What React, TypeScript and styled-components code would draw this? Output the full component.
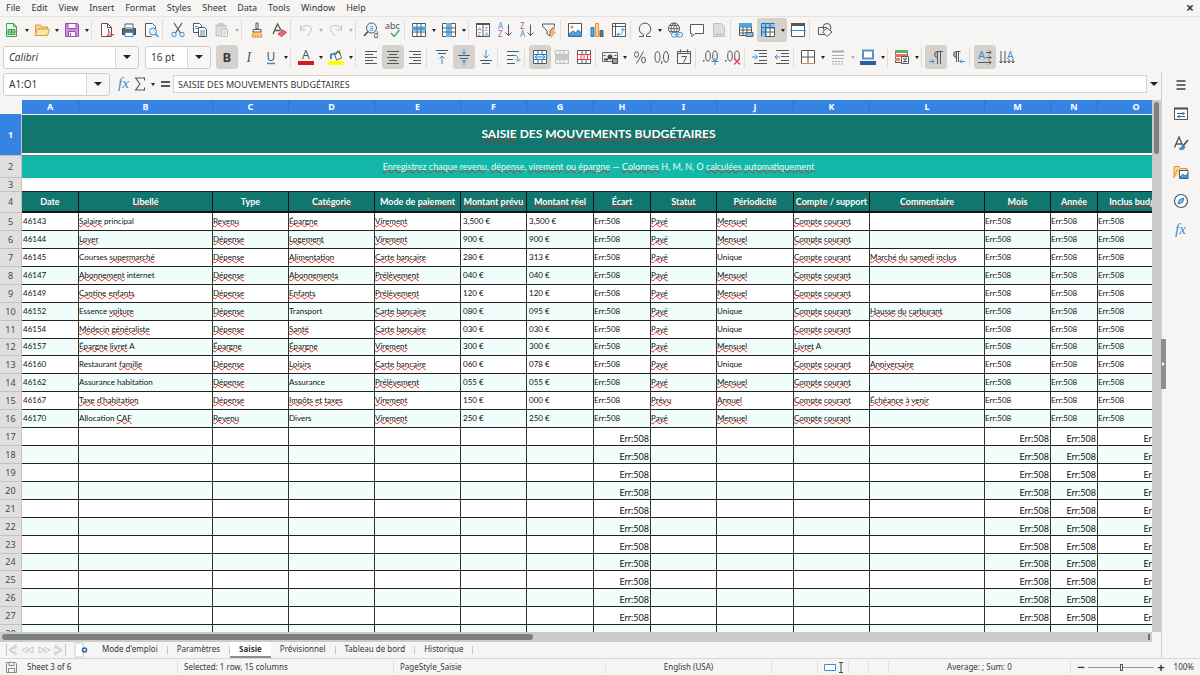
import React from 'react';
import styled, { createGlobalStyle, css } from 'styled-components';

const GlobalStyle = createGlobalStyle`
  * { box-sizing: border-box; }
  body { margin: 0; background: #f6f5f4; color: #33373a; font: 9px/12px "Noto Sans", "Open Sans", sans-serif; overflow: hidden; }
  button, input { font: inherit; color: inherit; margin: 0; padding: 0; border: 0; background: none; }
  svg { display: block; flex: none; overflow: visible; }
`;

/* ---------- icons ---------- */

const G = '#55585a';
const B = '#3c8fd0';
const O = '#e58f3c';
const D = '#c3c2c1';
const V2 = '#b05ac0';

const p = (d: string, stroke = G, fill = 'none', w = 1) => (
  <path d={d} stroke={stroke} fill={fill} strokeWidth={w} />
);
const grid = 'M1.5 1.5h13v13h-13zM1.5 6h13M1.5 10h13M6 1.5v13M10 1.5v13';

const ICONS: Record<string, React.ReactNode> = {
  new: <>{p('M2.5 1.5h7l3 3v10h-10z', '#3fa34d', '#e9f7ea')}{p('M9.5 1.5v3h3', '#3fa34d')}{p('M4 7.5h7v5H4zM4 10h7M7.5 7.5v5', '#3fa34d', '#9ed8a3')}</>,
  open: <>{p('M1.5 13V3h5l1 2h6v2', '#e09a3b', '#fbd58c')}{p('M1 13.5L3.5 7H15.5l-2 6.5z', '#e09a3b', '#fde3ac')}</>,
  save: <>{p('M1.5 1.5h12l1 1v12h-13z', '#9c4fb0', '#cf8fdd')}{p('M4 1.5h8v5H4z', '#9c4fb0', '#fff')}{p('M4.5 9.5h7v5h-7z', '#9c4fb0', '#fff')}{p('M6.5 11v3', '#9c4fb0')}</>,
  pdf: <>{p('M2.500 1.5h6l4 4v9h-10z', G, '#fdfdfd')}{p('M8.5 1.5v4h4')}{p('M7 15c3-3 3-5 2.5-8c0 4 2 5 5.500 6c-3-1-5 0-8 2', '#d9434b')}</>,
  print: <>{p('M4 2h8v4H4z', G, '#fff')}{p('M1.5 6.5h13v6h-13z', '#3f4447', '#63686b')}{p('M4 6h8', '#7cc4f3', 'none', 2)}{p('M4 10.5h8v4H4z', B, '#fff')}</>,
  preview: <>{p('M2.5 14.5v-13h7l3 3V7', G, '#fdfdfd')}{p('M2.5 14.500h6')}<circle cx="10" cy="9.5" r="3.5" stroke={B} fill="#e5f2fb" />{p('M12.500 12l3 3', B, 'none', 1.5)}</>,
  cut: <>{p('M4 1l6.5 10M12 1L5.5 11', G, 'none', 1.2)}<circle cx="4" cy="12.500" r="2.2" stroke={B} fill="none" /><circle cx="12" cy="12.5" r="2.2" stroke={B} fill="none" /></>,
  copy: <>{p('M1.5 1.5h6l2 2v7h-8z', G, '#fff')}{p('M6.5 5.5h6l2 2v7h-8z', G, '#fff')}{p('M8 9h5M8 11h5M8 13h5M3 4.5h3M3 6.5h3', B)}</>,
  paste: <>{p('M2 3h10v11H2z', D, '#dddddc')}{p('M5 1.5h4v3H5z', D, '#cfcfce')}{p('M7.5 7.5h6v7h-6z', D, '#f3f3f2')}{p('M9 10h3M9 12h3', D)}</>,
  clone: <>{p('M7 1h2v6H7z', G, '#fff')}{p('M4 7.5h8v2.5H4z', G, '#fff')}{p('M4 10.5L3 15h10l-1-4.5z', O, '#fbd58c')}{p('M6 12v3M9 12v3', O)}</>,
  clear: <>{p('M2 12L6.5 2L10.5 9M4 8.5h5', G, 'none', 1.3)}{p('M7 12l5-4l3.5 2.5l-5 4z', '#d9434b', '#ee6a72')}</>,
  undo: <>{p('M2.5 3v5h5', D)}{p('M2.5 8C5 2 13 2 13.5 7c0 3-3 4-4 7', D)}</>,
  redo: <>{p('M13.5 3v5h-5', D)}{p('M13.5 8C11 2 3 2 2.5 7c0 3 3 4 4 7', D)}</>,
  find: <><circle cx="8.5" cy="6" r="5" stroke={G} fill="#eaf4fc" />{p('M5 9.5L1 14', G, 'none', 1.8)}<text x="6" y="8.5" fontSize="8" fill={B}>a</text><text x="10.5" y="15.5" fontSize="8" fill={G}>d</text></>,
  spell: <><text x="0" y="7" fontSize="9" fill={G}>abc</text>{p('M6 11l3 3.5L14.5 8', '#43a85a', 'none', 1.4)}</>,
  row: <>{p(grid, G, '#fff')}<rect x="1" y="4.5" width="14" height="4" fill="#4fa3e0" />{p('M6 5v3M10 5v3', '#2d7ab8')}</>,
  col: <>{p(grid, G, '#fff')}<rect x="5" y="1" width="5" height="14" fill="#6bb5ea" />{p('M5 6h5M5 10h5', '#2d7ab8')}</>,
  sort: <>{p('M1.5 1.5h13v13h-13zM8 1.5v13', G, '#fff')}{p('M1 2h14', G, 'none', 2)}<text x="2.5" y="8.500" fontSize="6" fill={B}>A</text><text x="2.5" y="14" fontSize="6" fill={V2}>Z</text><text x="9.5" y="8.5" fontSize="6" fill={V2}>Z</text><text x="9.5" y="14" fontSize="6" fill={B}>A</text></>,
  asc: <><text x="1" y="7" fontSize="8" fill={B}>A</text><text x="1" y="15" fontSize="8" fill={V2}>Z</text>{p('M11.5 2.5v11M8.5 10.5l3 3l3-3')}</>,
  desc: <><text x="1" y="7" fontSize="8" fill={V2}>Z</text><text x="1" y="15" fontSize="8" fill={B}>A</text>{p('M11.5 2.5v11M8.5 10.5l3 3l3-3')}</>,
  filter: <>{p('M1.5 2h12v2L9 9v5l-3-2V9L1.5 4z')}{p('M12 6l-3 5h2l-1 5l4.5-6h-2.5l2-4z', O, '#fbb765', 0.5)}</>,
  image: <>{p('M1.5 1.5h13v13h-13z', G, '#fff')}{p('M2 12l4-3l3 2l2-3l3.5 3v3H2z', '#2f7fc0', '#4fa3e0')}<circle cx="5" cy="5" r="1.5" fill={O} /></>,
  chart: <>{p('M2 5.5h3v9H2z', '#2f7fc0', '#4fa3e0')}{p('M6.5 1.5h3v13h-3z', O, '#fbd58c')}{p('M11 8.5h3v6h-3z', G, '#777')}</>,
  pivot: <>{p('M1.5 1.5h13v13h-13zM1.5 4.5h13M4.5 1.5v13', G, '#fff')}{p('M6 12.5h2c3 0 4-2 4-6M8 10.5l-2 2l2 2M10 8.500l2-2l2 2', B)}</>,
  omega: p('M2 14.5h4.5v-2A5.8 5.8 0 1 1 9.5 12.5v2H14'),
  link: <><circle cx="7" cy="6.5" r="5.5" stroke={G} fill="none" />{p('M1.5 6.5h11M7 1v11M3 3.5h8M3 9.5h8M7 1c-4 3-4 8 0 11c4-3 4-8 0-11', G, 'none', 0.8)}<rect x="4.5" y="10.5" width="6" height="4.5" rx="2" stroke={B} fill="#f6f5f4" /><rect x="9.5" y="10.5" width="6" height="4.5" rx="2" stroke={B} fill="#f6f5f4" />{p('M7.500 12.750h5', B)}</>,
  comment: p('M1.5 2.5h13v9H6l-3 3v-3H1.5z', G, '#fdfdfd'),
  header: <>{p('M2.5 1.5h8l3 3v10h-11z', D, '#dededd')}{p('M4 12.5h8', '#c6c6c5', 'none', 2)}</>,
  printarea: <>{p('M1.5 1.5h12v12h-12zM1.5 5h12M1.5 8h12M1.5 11h12M5 1.5v12M9 1.5v12', G, '#fff')}<rect x="1" y="1" width="13" height="4" fill="#4fa3e0" />{p('M8 10.5h7v4H8z', '#42627c', '#8db8d6')}</>,
  freeze: <>{p(grid, G, '#fff')}<path d="M1 1h5v14H1zM6 1h9v5H6z" fill="#8bc6f0" />{p('M5.5 1v14M1 5.5h14M1.5 1.5h13M1.5 1.5v13M1.5 10h4M10 1.5v4', '#2873ad')}</>,
  split: <>{p('M1.5 1.5h13v13h-13z', G, '#fff')}{p('M1 2.5h14', G, 'none', 3)}{p('M0 8.5h16', B)}</>,
  shapes: <>{p('M1.5 5.5h8v7h-8z')}<circle cx="10" cy="5.5" r="4" stroke={G} fill="none" />{p('M10 6l5 4l-5 4.5L5.5 10z', G, '#f6f5f4')}</>,
  bold: <text x="3.5" y="12.5" fontSize="13" fontWeight="700" fill="#3a3d3f" fontFamily="Noto Sans">B</text>,
  italic: <text x="5.5" y="12.5" fontSize="14" fontStyle="italic" fill={G} fontFamily="Liberation Serif">I</text>,
  underline: <><text x="3.5" y="12" fontSize="12" fill={G}>U</text>{p('M4 14.5h8', B, 'none', 1.5)}</>,
  color: <><text x="4" y="10" fontSize="12" fill={G}>A</text><rect x="0" y="12" width="16" height="4" fill="#c9211e" /></>,
  fill: <>{p('M6.500 4.500l5-1.500l2 6l-5 2z', G, '#fff')}{p('M7.500 6l2-4h2v3', G)}{p('M3 10V5.500l4-1', B, 'none', 2)}<rect x="0" y="12" width="16" height="4" fill="#ffff00" /></>,
  left: p('M2 2.500h12M2 5.500h8M2 8.500h12M2 11.500h8M2 14.500h12'),
  center: p('M2 2.5h12M4 5.5h8M2 8.5h12M4 11.5h8M2 14.5h12'),
  right: p('M2 2.5h12M6 5.5h8M2 8.5h12M6 11.5h8M2 14.5h12'),
  top: <>{p('M2 1.5h12M4 4.5h8')}{p('M8 15V7M5.5 9.5L8 7l2.5 2.5', B)}</>,
  middle: <>{p('M2 6.5h12M4 9.5h8')}{p('M8 0v5M6 3l2 2l2-2M8 16v-5M6 13l2-2l2 2', B)}</>,
  bottom: <>{p('M2 11.5h12M4 14.5h8')}{p('M8 1v8M5.5 6.5L8 9l2.5-2.5', B)}</>,
  wrap: <>{p('M2 2.5h12M2 6.5h7M2 10.5h6M2 14.5h8')}{p('M9 6.5h1c3 0 3 2 3 5M10.5 10l2.5 2.5L15.5 10', B)}</>,
  mergec: <>{p(grid, G, '#fff')}<rect x="1.5" y="5.5" width="13" height="5" fill="#e5f2fb" stroke="#2f7fc0" />{p('M3 8h10M5 6L3 8l2 2M11 6l2 2l-2 2', B)}</>,
  merge: <>{p(grid, D, '#eeeeed')}<rect x="1" y="5" width="14" height="6" fill="#c6c6c5" /></>,
  unmerge: <>{p(grid, G, '#fff')}{p('M1.5 5.5h13v5h-13zM5 5v6M8 5v6M11.5 5v6', '#d9434b', '#fff')}</>,
  currency: <>{p('M.5 3.5h15v9H.5z', '#6a6d6f', '#f0f0ef')}<circle cx="8" cy="8" r="2.5" fill="#4a4d4f" />{p('M10.5 9.500h5v5h-5z', '#4a4d4f', '#9a9d9f')}{p('M2 10.500h4M2.500 6v1M13.500 6v1', '#4a4d4f', 'none', 2)}</>,
  percent: <><ellipse cx="4.5" cy="5.5" rx="2" ry="2.8" stroke={G} fill="none" /><ellipse cx="11.5" cy="11" rx="2" ry="2.8" stroke={G} fill="none" />{p('M11.5 2.5l-7 12')}</>,
  number: <><ellipse cx="3.500" cy="8" rx="2.5" ry="5.5" stroke={G} fill="none" /><ellipse cx="12" cy="8" rx="2.5" ry="5.5" stroke={G} fill="none" />{p('M8 12l-.5 3')}</>,
  date: <>{p('M1.5 2.5h13v12h-13zM1.5 4.5h13M4.5 .5v3M11.5 .5v3')}{p('M5.5 7.500h5l-3 6')}</>,
  adddec: <><ellipse cx="5" cy="7" rx="2.3" ry="5" stroke={G} fill="none" /><ellipse cx="12" cy="7" rx="2.3" ry="5" stroke={G} fill="none" /><rect x="0" y="11" width="1.5" height="1.5" fill={G} />{p('M12 9v7M8.5 12.5h7', B)}</>,
  deldec: <><ellipse cx="5" cy="7" rx="2.3" ry="5" stroke={G} fill="none" /><ellipse cx="12" cy="7" rx="2.3" ry="5" stroke={G} fill="none" /><rect x="0" y="11" width="1.5" height="1.5" fill={G} />{p('M9 9.5l6 6M15 9.5l-6 6', '#e0434b', 'none', 1.2)}</>,
  indent: <>{p('M2 1.5h13M7 4.5h8M7 7.5h8M7 11.5h8M2 14.5h13')}{p('M0 8h5M3 5.5L5.5 8L3 10.5', B)}</>,
  outdent: <>{p('M2 1.5h13M7 4.5h8M7 7.5h8M7 11.5h8M2 14.5h13')}{p('M6 8H1M3.5 5.5L1 8l2.5 2.5', B)}</>,
  borders: <>{p('M1.5 1.5h13v13h-13z', G, '#fff')}{p('M1.5 8h13M8 1.5v13')}{p('M1.5 14.5h13', O)}</>,
  lines: <>{p('M2 2.5h12', '#aaa', 'none', 2)}{p('M2 6.5h12M2 9.5h12', '#aaa')}<path d="M2 12.5h12M2 15h12" stroke="#aaa" strokeDasharray="2 1" /></>,
  bcolor: <>{p('M3 1.5h10v8H3z', '#5c93c4', '#fff', 2)}<rect x="0" y="12" width="16" height="4" fill="#2a6099" /></>,
  cond: <>{p('M1.5 1.5h12v12h-12z', G, '#fff')}<rect x="1" y="1" width="13" height="3" fill="#58b368" /><rect x="1" y="5" width="13" height="3" fill="#ee6a72" /><rect x="1" y="9" width="5" height="3" fill={O} />{p('M7.5 7.5h7v7h-7z', G, '#fff')}{p('M9 10h4M9 12.5h4M12 8.5l-2 5')}</>,
  ltr: <>{p('M9.500 15V2.5h5.500M12.5 2.5V15')}{p('M9.500 2.5a3 3 0 0 0 0 6z', G, '#b9b7b5')}{p('M1 12.5h5M4 10.5l2 2l-2 2', B)}</>,
  rtl: <>{p('M6.500 13V2.5h4M8.5 2.5V13')}{p('M6.500 2.5a3 3 0 0 0 0 6z', G, '#a9a9a8')}{p('M15 12.5h-5M12 10.5l-2 2l2 2', B)}</>,
  horiz: <><text x="1" y="10" fontSize="11" fill={B}>A</text>{p('M9 3.5h5M9 8.5h5M1 13.5h13M12 1.5l2 2l-2 2M12 6.5l2 2l-2 2M12 11.5l2 2l-2 2')}</>,
  vert: <>{p('M2 2v12M6 2v12M10 10v4M14 10v4M.5 12L2 14l1.5-2M4.5 12L6 14l1.5-2M8.5 12l1.5 2l1.5-2M12.5 12l1.5 2l1.5-2')}<text x="8" y="9.5" fontSize="10" fill={B}>A</text></>,
  fx: <text x="2" y="12" fontSize="15" fontStyle="italic" fill={B} fontFamily="Liberation Serif">fx</text>,
  sigma: p('M12.500 4.500V2H3.5l4.5 6l-4.5 6h9v-2.500', G, 'none', 1.1),
  equals: p('M4 6h9M4 10h9', G, 'none', 1.8),
  menu: p('M3.5 4h9M3.5 8h9M3.5 12h9', '#3a3d3f', 'none', 1.5),
  props: <>{p('M1.5 2.5h13v11h-13z', G, '#fff')}{p('M1 2.500h14', '#4a4d4f', 'none', 2)}{p('M4 7.5h8M4 10.5h8', G)}{p('M10 6v3M6 9v3', B, 'none', 1.5)}</>,
  styles: <>{p('M1.5 12.5L6 2L9.5 10M3 9h5.5', G, 'none', 1.4)}{p('M15 5l-5 6', G, 'none', 1.8)}{p('M10 11l2 1c-1 3-4 3-6 2c2 0 2-3 4-3', '#2f7fc0', B)}</>,
  gallery: <>{p('M1 13.5v-11h5l1 2h7v2', O, '#fbd9a5')}{p('M1 13.5L4 6h3', O)}{p('M6.5 6.5h8.500v8h-8.500z', G, '#fff')}{p('M7 13l3-3l2 2l2.500-2v4H7z', '#2f7fc0', '#4fa3e0')}</>,
  nav: <><circle cx="8" cy="8" r="6.5" stroke={G} fill="#fff" strokeWidth="1.2" />{p('M5 11l1.5-4.500L11 5L9.5 9.5z', '#2f7fc0', '#7cc0f0')}</>,
};

const Icon = ({ name }: { name: string }) => (
  <svg width="16" height="16" viewBox="0 0 16 16" fill="none" aria-hidden="true">{ICONS[name]}</svg>
);

const Caret = styled.span<{ $big?: boolean; $dim?: boolean }>`
  border: solid transparent;
  border-width: ${(q) => (q.$big ? '4px 4px 0' : '3px 2px 0')};
  border-top-color: ${(q) => (q.$dim ? '#b0b0af' : '#222')};
`;

/* ---------- frame ---------- */

const Window = styled.div`
  display: flex;
  flex-direction: column;
  height: 100vh;
  background: #f6f5f4;
`;

const MenuBar = styled.nav`
  display: flex;
  align-items: center;
  height: 17px;
  padding: 0 5px 0 6px;
  gap: 11px;
  border-bottom: 1px solid #e3e2e0;
`;

const MenuItem = styled.button`
  font-size: 9px;
  &:last-child { margin-left: auto; font-size: 14px; font-weight: 700; padding-right: 1px; }
`;

const Toolbar = styled.div<{ $tall?: boolean }>`
  display: flex;
  align-items: center;
  height: ${(q) => (q.$tall ? 28 : 26)}px;
  padding-left: ${(q) => (q.$tall ? 2 : 1)}px;
`;

const ToolButton = styled.span<{ $on?: boolean }>`
  display: flex;
  align-items: center;
  height: 24px;
  border-radius: 3px;
  background: ${(q) => (q.$on ? '#d5d1cd' : 'transparent')};
  button { display: flex; align-items: center; justify-content: center; width: 22px; height: 24px; }
  button + button { width: 8px; }
`;

const Sep = styled.span<{ $tight?: boolean }>`
  width: ${(q) => (q.$tight ? 4 : 5)}px;
  height: 20px;
  border-left: 1px solid #dedddb;
`;

/* "|" is a separator, ":" a narrow one; after the slash "v" adds a drop-down, "x" a disabled one, "*" marks it pressed */
const Tools = ({ items }: { items: string }) => (
  <>
    {items.split(' ').map((it, i) => {
      if (it === '|' || it === ':') return <Sep key={i} $tight={it === ':'} />;
      const [name, flags = ''] = it.split('/');
      return (
        <ToolButton key={i} $on={flags.includes('*')}>
          <button aria-label={name}><Icon name={name} /></button>
          {/[vx]/.test(flags) && <button aria-label={`${name} options`}><Caret $dim={flags.includes('x')} /></button>}
        </ToolButton>
      );
    })}
  </>
);

const Combo = styled.div<{ $w: number; $italic?: boolean }>`
  display: flex;
  width: ${(q) => q.$w}px;
  height: 23px;
  margin: 0 5px 0 1px;
  border: 1px solid #cfccc9;
  border-radius: 3px;
  background: #fff;
  input { flex: 1; min-width: 0; padding: 0 5px; font-size: 10px; font-style: ${(q) => (q.$italic ? 'italic' : 'normal')}; }
  button { display: flex; align-items: center; justify-content: center; width: 23px; border-left: 1px solid #dcdad8; background: #f8f7f6; border-radius: 0 3px 3px 0; }
`;

const Main = styled.div`
  display: flex;
  flex: 1;
  min-height: 0;
`;

const Document = styled.main`
  display: flex;
  flex-direction: column;
  flex: 1;
  min-width: 0;
`;

const FormulaBar = styled.div`
  display: flex;
  align-items: center;
  height: 26px;
  margin-bottom: 3px;
  padding-left: 2px;
`;

const FormulaButton = styled.button<{ $w: number }>`
  display: flex;
  align-items: center;
  justify-content: center;
  width: ${(q) => q.$w}px;
  height: 22px;
`;

const FormulaInput = styled.input`
  flex: 1;
  min-width: 0;
  height: 18px;
  && { border: 1px solid #d5d3d1; background: #fff; padding: 0 4px; }
`;

const SheetRow = styled.div`
  display: flex;
  flex: 1;
  min-height: 0;
`;

const Viewport = styled.div`
  flex: 1;
  min-width: 0;
  overflow: hidden;
  background: #fff;
`;

const VTrack = styled.div`
  width: 9px;
  padding: 2px;
  background: #cbcbcb;
  div { height: 52px; border-radius: 3px; background: #7f7f7f; }
`;

const HTrack = styled.div`
  display: flex;
  justify-content: space-between;
  height: 10px;
  margin-right: 9px;
  padding: 2px;
  background: #cbcbcb;
  div { width: calc(46% + 3px); border-radius: 3px; background: #7f7f7f; }
  span { width: 2px; background: #6b6b6b; }
`;

/* ---------- sheet ---------- */

const Grid = styled.table`
  table-layout: fixed;
  width: 1175px;
  border-collapse: separate;
  border-spacing: 0;
  font: 8px/10px Lato, Carlito, sans-serif;
  color: #111;
  th, td { padding: 0; overflow: hidden; white-space: nowrap; }
`;

const ColHead = styled.th`
  height: 14px;
  background: #3584e4;
  border-right: 1px solid #2f74c9;
  color: #fff;
  font: 700 9px/12px "Noto Sans", sans-serif;
  &:first-child { background: #f6f5f4; border: 0; }
`;

const RowHead = styled.th<{ $on?: boolean }>`
  font: ${(q) => (q.$on ? 700 : 400)} 9px/12px "Noto Sans", sans-serif;
  background: ${(q) => (q.$on ? '#3584e4' : '#e0dfde')};
  color: ${(q) => (q.$on ? '#fff' : '#44484a')};
  border-right: 1px solid #c4c2c0;
  border-bottom: 1px solid #c4c2c0;
`;

const TitleCell = styled.td`
  background: #10766e;
  box-shadow: inset 0 1px #fff, inset 0 -1px #6f7f7d, inset 0 -3px #fff;
  color: #fff;
  text-align: center;
  font-size: 12px;
  font-weight: 700;
  line-height: 16px;
  && { padding-bottom: 3px; }
`;

const SubtitleCell = styled.td`
  background: #14b8a9;
  color: #e6fffb;
  text-align: center;
  font-size: 9px;
`;

const BlankCell = styled.td`
  background: #fff;
  border-bottom: 1px solid #222;
`;

const HeadCell = styled.th`
  background: #10766e;
  border-right: 1px solid #111;
  border-bottom: 2px solid #111;
  color: #fff;
  font-size: 9px;
  font-weight: 700;
`;

const Row = styled.tr<{ $h?: number }>`
  height: ${(q) => q.$h ?? 18}px;
  ${(q) => !q.$h && css`&:nth-child(12n) { height: 17px; }`}
`;

const Cell = styled.td<{ $alt: boolean; $kind: string }>`
  background: ${(q) => (q.$alt ? '#f0fdfa' : '#fff')};
  border-right: 1px solid #333;
  border-bottom: 1px solid #222;
  && { padding: 0 0 2px; }
  ${(q) => q.$kind === 'text' && css`&:nth-child(2) { padding-left: 1px; }`}
  ${(q) => q.$kind === 'money' && css`&& { padding-left: 2px; }`}
  ${(q) => q.$kind === 'pending' && css`
    && { padding: 4px 1px 0; }
    text-align: right;
    font-size: 9px;
  `}
`;

const Misspelt = styled.span`
  text-decoration: underline wavy #e0241b 1px;
  text-decoration-skip-ink: none;
  text-underline-offset: -1px;
`;

/* Words between braces carry the spelling mark */
const Txt = ({ s }: { s: string }) => (
  <>{s.split(/[{}]/).map((t, i) => (i % 2 ? <Misspelt key={i}>{t}</Misspelt> : t))}</>
);

const WIDTHS = [22, 57, 134, 76, 86, 86, 66, 67, 57, 66, 77, 76, 115, 66, 47, 77];
const COLS = 'ABCDEFGHIJKLMNO'.split('');
const HEADS = ['Date', '{Libellé}', 'Type', '{Catégorie}', 'Mode de {paiement}', '{Montant} {prévu}', '{Montant} {réel}', '{Écart}', '{Statut}', '{Périodicité}', '{Compte} / support', '{Commentaire}', '{Mois}', '{Année}', '{Inclus} {budget}'];
const E = 'Err:508';
const CC = '{Compte} {courant}';
const P = '{Payé}';
const M = '{Mensuel}';
const DEP = '{Dépense}';
const V = '{Virement}';
const CB = '{Carte} {bancaire}';
const PR = '{Prélèvement}';
const DATA = [
  ['46143', '{Salaire} principal', '{Revenu}', '{Épargne}', V, '3,500 €', '3,500 €', P, M, CC, ''],
  ['46144', '{Loyer}', DEP, '{Logement}', V, '900 €', '900 €', P, M, CC, ''],
  ['46145', 'Courses {supermarché}', DEP, '{Alimentation}', CB, '280 €', '313 €', P, 'Unique', CC, '{Marché} {du} {samedi} {inclus}'],
  ['46147', '{Abonnement} internet', DEP, '{Abonnements}', PR, '040 €', '040 €', P, M, CC, ''],
  ['46149', '{Cantine} {enfants}', DEP, '{Enfants}', PR, '120 €', '120 €', P, M, CC, ''],
  ['46152', 'Essence {voiture}', DEP, 'Transport', CB, '080 €', '095 €', P, 'Unique', CC, '{Hausse} {du} {carburant}'],
  ['46154', '{Médecin} {généraliste}', DEP, '{Santé}', CB, '030 €', '030 €', P, 'Unique', CC, ''],
  ['46157', '{Épargne} {livret} A', '{Épargne}', '{Épargne}', V, '300 €', '300 €', P, M, '{Livret} A', ''],
  ['46160', 'Restaurant {famille}', DEP, '{Loisirs}', CB, '060 €', '078 €', P, 'Unique', CC, '{Anniversaire}'],
  ['46162', 'Assurance habitation', DEP, 'Assurance', PR, '055 €', '055 €', P, M, CC, ''],
  ['46167', "{Taxe} {d'habitation}", DEP, '{Impôts} {et} {taxes}', V, '150 €', '000 €', '{Prévu}', '{Annuel}', CC, '{Échéance} {à} {venir}'],
  ['46170', 'Allocation {CAF}', '{Revenu}', 'Divers', V, '250 €', '250 €', P, M, CC, ''],
];
const FULL = DATA.map((r) => [...r.slice(0, 7), E, ...r.slice(7), E, E, E]);
const PENDING = COLS.map((c) => ('HMNO'.includes(c) ? E : ''));

/* ---------- sheet tabs, status bar, sidebar ---------- */

const TabBar = styled.div`
  display: flex;
  align-items: center;
  height: 16px;
  padding-left: 5px;
  font-size: 8px;
`;

const NewSheet = styled.button`
  margin: 0 5px 0 7px;
`;

const Tab = styled.button<{ $on?: boolean }>`
  height: 16px;
  padding: 0 9px;
  border-bottom: 2px solid transparent;
  ${(q) => q.$on && css`&& { background: #fff; border-bottom: 2px solid #8e8e8d; font-weight: 700; }`}
`;

const TabSep = styled.i`
  width: 1px;
  height: 8px;
  background: #c8c6c4;
`;

const StatusBar = styled.footer`
  display: flex;
  align-items: center;
  height: 17px;
  border-top: 1px solid #d9d7d5;
  font-size: 8px;
`;

const Field = styled.span<{ $w?: number; $center?: boolean }>`
  display: flex;
  align-items: center;
  justify-content: ${(q) => (q.$center ? 'center' : 'flex-start')};
  ${(q) => (q.$w ? css`width: ${q.$w}px;` : css`flex: 1;`)}
  height: 12px;
  padding: 0 6px;
  border-right: 1px solid #e4e2e0;
  &:first-child { border: 0; }
`;

const Zoom = styled.div`
  display: flex;
  align-items: center;
  width: 129px;
  padding: 0 6px;
  gap: 3px;
  button { width: 8px; font-size: 13px; font-weight: 700; }
  span { margin-left: auto; }
`;

const Slider = styled.input.attrs({ type: 'range' })`
  appearance: none;
  width: 66px;
  height: 1px;
  && { background: #9c9b9a; }
  &::-webkit-slider-thumb { appearance: none; width: 3px; height: 7px; border: 1px solid #555; background: #f6f5f4; }
`;

const Sidebar = styled.aside`
  position: relative;
  display: flex;
  flex-direction: column;
  align-items: center;
  gap: 13px;
  width: 39px;
  padding-top: 6px;
  border-left: 1px solid #d3d1cf;
  button { display: flex; }
`;

const Handle = styled.span`
  position: absolute;
  left: -1px;
  top: 268px;
  width: 5px;
  height: 50px;
  background: #8f8f8e;
  &::after { content: ''; position: absolute; left: 1px; top: 23px; border: solid transparent; border-width: 2px 0 2px 3px; border-left-color: #fff; }
`;

const TABS = ["Mode d'emploi", 'Paramètres', 'Saisie', 'Prévisionnel', 'Tableau de bord', 'Historique'];

export default function App() {
  return (
    <Window>
      <GlobalStyle />
      <MenuBar>
        {['File', 'Edit', 'View', 'Insert', 'Format', 'Styles', 'Sheet', 'Data', 'Tools', 'Window', 'Help'].map((m) => (
          <MenuItem key={m}>{m}</MenuItem>
        ))}
        <MenuItem aria-label="Close">×</MenuItem>
      </MenuBar>
      <Toolbar>
        <Tools items="new/v open/v save/v | pdf print preview | cut copy paste/x | clone clear | undo/x redo/x | find spell : row/v col/v : sort asc desc filter : image chart pivot : omega/v link comment header | printarea freeze/*v split | shapes" />
      </Toolbar>
      <Toolbar $tall>
        <Combo $w={136} $italic><input aria-label="Font name" defaultValue="Calibri" /><button aria-label="Choose font"><Caret $big /></button></Combo>
        <Combo $w={66}><input aria-label="Font size" defaultValue="16 pt" /><button aria-label="Choose size"><Caret $big /></button></Combo>
        <Tools items="bold/* italic underline/v | color/v fill/v | left center/* right | top middle/* bottom | wrap | mergec/* merge unmerge : currency/v percent number date | adddec deldec | indent outdent : borders/v lines/x bcolor/v : cond/v : ltr/* rtl | horiz/* vert" />
      </Toolbar>
      <Main>
        <Document>
          <FormulaBar>
            <Combo $w={107}><input aria-label="Name box" defaultValue="A1:O1" /><button aria-label="Choose range"><Caret $big /></button></Combo>
            <FormulaButton $w={17} aria-label="Function wizard"><Icon name="fx" /></FormulaButton>
            <FormulaButton $w={16} aria-label="Select function"><Icon name="sigma" /></FormulaButton>
            <FormulaButton $w={9} aria-label="Function list"><Caret /></FormulaButton>
            <FormulaButton $w={16} aria-label="Formula"><Icon name="equals" /></FormulaButton>
            <FormulaInput aria-label="Input line" defaultValue="SAISIE DES MOUVEMENTS BUDGÉTAIRES" />
            <FormulaButton $w={14} aria-label="Expand input line"><Caret $big /></FormulaButton>
          </FormulaBar>
          <SheetRow>
            <Viewport>
              <Grid>
                <colgroup>{WIDTHS.map((w, i) => <col key={i} width={w} />)}</colgroup>
                <thead>
                  <tr><ColHead />{COLS.map((c) => <ColHead key={c}>{c}</ColHead>)}</tr>
                </thead>
                <tbody>
                  <Row $h={42}><RowHead $on>1</RowHead><TitleCell colSpan={15}><Txt s="{SAISIE} DES {MOUVEMENTS} {BUDGÉTAIRES}" /></TitleCell></Row>
                  <Row $h={22}><RowHead>2</RowHead><SubtitleCell colSpan={15}><Txt s="{Enregistrez} {chaque} {revenu}, {dépense}, {virement} {ou} {épargne} — {Colonnes} H, M, N, O {calculées} {automatiquement}" /></SubtitleCell></Row>
                  <Row $h={14}><RowHead>3</RowHead><BlankCell colSpan={15} /></Row>
                  <Row $h={21}><RowHead>4</RowHead>{HEADS.map((h) => <HeadCell key={h}><Txt s={h} /></HeadCell>)}</Row>
                  {Array.from({ length: 24 }, (_, r) => {
                    const full = FULL[r];
                    return (
                      <Row key={r}>
                        <RowHead>{r + 5}</RowHead>
                        {(full ?? PENDING).map((v, c) => (
                          <Cell key={c} $alt={r % 2 === 1} $kind={!full ? 'pending' : c === 5 || c === 6 ? 'money' : 'text'}><Txt s={v} /></Cell>
                        ))}
                      </Row>
                    );
                  })}
                </tbody>
              </Grid>
            </Viewport>
            <VTrack><div /></VTrack>
          </SheetRow>
          <HTrack><div /><span /></HTrack>
          <TabBar>
            <svg width="62" height="12" viewBox="0 0 62 12" fill="none" stroke="#c9c7c5" aria-hidden="true">
              <path d="M1.5 0v12M11 1L4 6l7 5V8H8l-2-2l2-2h3zM22 3l-5 3l5 3zM28 3l-5 3l5 3zM34 3l5 3l-5 3zM40 3l5 3l-5 3zM50 1l7 5l-7 5V8h3l2-2l-2-2h-3zM60.5 0v12" />
            </svg>
            <NewSheet aria-label="Add sheet">
              <svg width="14" height="14" viewBox="0 0 14 14" aria-hidden="true"><path d="M1 0h8v14H1z" fill="#fff" stroke="#ccc" /><circle cx="10.5" cy="7" r="2" fill="none" stroke="#2b5fa8" strokeWidth="1.5" /></svg>
            </NewSheet>
            {TABS.map((t, i) => (
              <React.Fragment key={t}>
                <Tab $on={t === 'Saisie'}>{t}</Tab>
                {i !== 2 && <TabSep />}
              </React.Fragment>
            ))}
          </TabBar>
        </Document>
        <Sidebar>
          {['menu', 'props', 'styles', 'gallery', 'nav', 'fx'].map((n) => (
            <button key={n} aria-label={n}><Icon name={n} /></button>
          ))}
          <Handle />
        </Sidebar>
      </Main>
      <StatusBar>
        <Field $w={21}>
          <svg width="11" height="11" viewBox="0 0 11 11" fill="none" stroke="#8a8a89" aria-hidden="true"><path d="M.5.5h9l1 1v9H.5zM3 .5v3h5v-3M2.5 10.5v-4h6v4" /></svg>
        </Field>
        <Field $w={157}>Sheet 3 of 6</Field>
        <Field $w={216}>Selected: 1 row, 15 columns</Field>
        <Field $w={212}>PageStyle_Saisie</Field>
        <Field $center>English (USA)</Field>
        <Field $w={46} />
        <Field $w={31}>
          <svg width="20" height="11" viewBox="0 0 20 11" fill="none" aria-hidden="true"><path d="M.5 2.5h11v6H.5z" stroke="#3c8fd0" fill="#fff" /><path d="M15 .5h4M17 .5v10M15 10.5h4" stroke="#444" /></svg>
        </Field>
        <Field $w={20} />
        <Field $w={20} />
        <Field $w={182} $center>Average: ; Sum: 0</Field>
        <Zoom>
          <button aria-label="Zoom out">−</button>
          <Slider aria-label="Zoom" defaultValue={50} />
          <button aria-label="Zoom in">+</button>
          <span>100%</span>
        </Zoom>
      </StatusBar>
    </Window>
  );
}
